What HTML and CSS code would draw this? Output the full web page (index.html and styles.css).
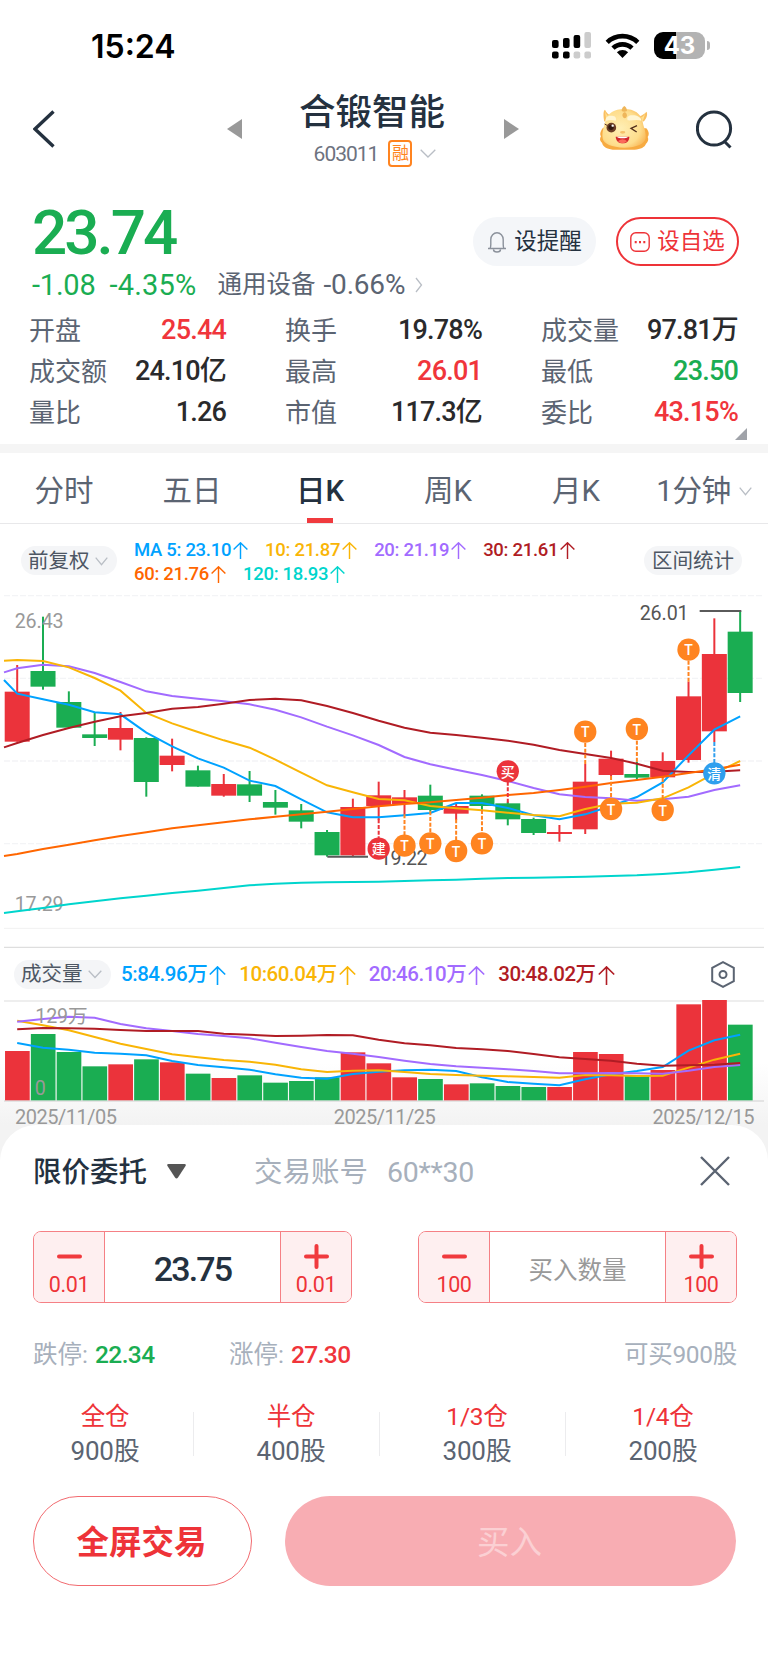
FILE: index.html
```
<!DOCTYPE html>
<html lang="zh-CN">
<head>
    <meta charset="UTF-8">
    <meta name="viewport" content="width=device-width, initial-scale=1.0">
    <title>合锻智能 603011</title>
    <link rel="stylesheet" href="styles.css">
</head>
<body>
    <svg width="0" height="0" class="defs">
        <symbol id="arrow" viewBox="0 0 17 19"><path d="M.8 8.500L8.500.9l7.700 7.600M8.500 1v18" fill="none" stroke="currentColor" stroke-width="1.600"/></symbol>
    </svg>

    <div class="status-bar">
        <span class="clock">15:24</span>
        <div class="status-icons">
            <svg class="signal" viewBox="0 0 39 27" width="39" height="27">
                <rect x="0" y="8" width="6.6" height="8" rx="2"/>
                <rect x="11" y="6" width="6.6" height="10" rx="2"/>
                <rect x="21.6" y="3" width="6.6" height="13" rx="2"/>
                <rect class="off" x="32.4" y="0" width="6.6" height="16" rx="2"/>
                <rect x="0" y="19.6" width="6.6" height="7" rx="2"/>
                <rect x="11" y="19.6" width="6.6" height="7" rx="2"/>
                <rect class="off" x="21.6" y="19.6" width="6.6" height="7" rx="2"/>
                <rect class="off" x="32.4" y="19.6" width="6.6" height="7" rx="2"/>
            </svg>
            <svg class="wifi" viewBox="0 0 35 25" width="35" height="25">
                <path d="M2.2 9.3a22 22 0 0 1 30.6 0M8 15.2a13.6 13.6 0 0 1 19 0" fill="none" stroke="#000" stroke-width="4.6"/>
                <path d="M17.5 25l-5.6-5.7a8 8 0 0 1 11.2 0z"/>
            </svg>
            <div class="battery"><span>43</span></div>
        </div>
    </div>

    <div class="header">
        <svg class="back" viewBox="0 0 22 38" width="22" height="38"><path d="M20.5 1.5L2 19l18.500 17.500"/></svg>
        <svg class="prev" viewBox="0 0 15 20" width="15" height="20"><path d="M15 0v20L0 10z"/></svg>
        <div class="stock">
            <h1>合锻智能</h1>
            <div class="stock-code">
                <span>603011</span>
                <span class="tag">融</span>
                <svg class="chevron" viewBox="0 0 16 9" width="16" height="9"><path d="M.7.7L8 8 15.300.7"/></svg>
            </div>
        </div>
        <svg class="next" viewBox="0 0 15 20" width="15" height="20"><path d="M0 0v20l15-10z"/></svg>
        <svg class="mascot" viewBox="0 0 150 138" width="50" height="46">
            <defs>
                <radialGradient id="skin" cx=".42" cy=".5" r=".65">
                    <stop offset="0" stop-color="#ffefb5"/>
                    <stop offset=".7" stop-color="#fedd8c"/>
                    <stop offset="1" stop-color="#f8b656"/>
                </radialGradient>
            </defs>
            <path d="M16 50C12 30 13 16 18 14c4 8 10 16 20 18zM134 50c12-14 12-26 8-30-4 6-12 10-20 14z" fill="#fabf62"/>
            <path d="M18 18c3 10 8 16 16 19l-12 12zM139 24c-4 8-8 12-14 14l6 12z" fill="#ffe08f"/>
            <path d="M12 68c-9 12-10 20-6 26-5 8-3 14 3 19 3 12 14 18 32 21h66c18-2 30-7 34-18 7-6 8-14 5-20 6-8 3-18-4-26z" fill="#f7ab42"/>
            <path d="M19 48C26 24 46 12 76 12s50 14 55 38c2 14 11 30 9 50-3 17-26 28-64 28S13 116 11 100c-3-18 4-34 8-52z" fill="url(#skin)"/>
            <path d="M68 18c0-8 4-13 8-15 4 2 8 8 8 15-5 3-11 3-16 0zM70 31c2-12 12-12 14 0-1 12-12 12-14 0z" fill="#efb65a"/>
            <path d="M20 48c-2-12 8-17 19-16 11 1 14 8 11 15-10-3-20-3-30 1zM86 46c-4-9 2-15 14-15 14 0 27 6 27 16-14-4-28 0-41-1z" fill="#fff5d2"/>
            <circle cx="37" cy="68" r="14.500" fill="#6b3d26"/>
            <circle cx="36" cy="67" r="8" fill="#2f1710"/>
            <circle cx="41" cy="62" r="3.500" fill="#fff"/>
            <path d="M24 61l-7-4" stroke="#5d3220" stroke-width="3"/>
            <path d="M114 62L96 70l17 11" fill="none" stroke="#54301c" stroke-width="4"/>
            <ellipse cx="71" cy="82" rx="8" ry="4" fill="#f6c06a"/>
            <path d="M50 95h41c0 13-8 20-20 20S51 108 50 95z" fill="#d3262c"/>
            <path d="M54 95h33c-3 6-30 6-33 0z" fill="#fff"/>
            <path d="M57 109c8-8 20-8 27 0-8 8-20 8-27 0z" fill="#fb6a5b"/>
        </svg>
        <svg class="search" viewBox="0 0 38 40" width="38" height="40"><circle cx="18" cy="18.500" r="16.600"/><path d="M28 31l6.500 6.500"/></svg>
    </div>

    <div class="quote">
        <div class="quote-left">
            <div class="price">23.74</div>
            <div class="change">
                <span class="down">-1.08</span>
                <span class="down pct">-4.35%</span>
                <span class="sector">通用设备</span>
                <span class="sector-pct">-0.66%</span>
                <svg class="chevron" viewBox="0 0 8 16" width="8" height="16"><path d="M1 1l5.500 7L1 15"/></svg>
            </div>
        </div>
        <div class="quote-actions">
            <button class="btn-alert">
                <svg viewBox="0 0 20 22" width="20" height="22"><path d="M1 17.500h18M3 17.500c.6-1 .8-2 .8-4V8.500a6.200 6.700 0 0 1 12.400 0v5c0 2 .2 3 .8 4M6.500 18.500a3.500 2.500 0 0 0 7 0"/></svg>设提醒
            </button>
            <button class="btn-fav">
                <svg viewBox="0 0 20 20" width="20" height="20"><rect x=".8" y=".8" width="18.400" height="18.400" rx="5"/><path d="M4.700 10.200h2M9 10.200h2M13.300 10.200h2" stroke-width="2.200"/></svg>设自选
            </button>
        </div>
    </div>

    <div class="stats">
        <div><label>开盘</label><b class="up">25.44</b></div>
        <div><label>换手</label><b>19.78%</b></div>
        <div><label>成交量</label><b>97.81万</b></div>
        <div><label>成交额</label><b>24.10亿</b></div>
        <div><label>最高</label><b class="up">26.01</b></div>
        <div><label>最低</label><b class="down">23.50</b></div>
        <div><label>量比</label><b>1.26</b></div>
        <div><label>市值</label><b>117.3亿</b></div>
        <div><label>委比</label><b class="up">43.15%</b></div>
    </div>
    <div class="expand"></div>

    <div class="tabs">
        <span>分时</span>
        <span>五日</span>
        <span class="active">日K</span>
        <span>周K</span>
        <span>月K</span>
        <span class="last">1分钟<svg class="chevron" viewBox="0 0 13 9" width="13" height="9"><path d="M.7.7l5.800 7 5.800-7"/></svg></span>
    </div>

    <div class="ma-bar">
        <span class="pill">前复权<svg class="chevron" viewBox="0 0 13 9" width="13" height="9"><path d="M.7.7l5.800 7 5.800-7"/></svg></span>
        <div class="ma-list">
            <div>
                <span class="ma5">MA 5: 23.10<svg class="arrow"><use href="#arrow"/></svg></span>
                <span class="ma10">10: 21.87<svg class="arrow"><use href="#arrow"/></svg></span>
                <span class="ma20">20: 21.19<svg class="arrow"><use href="#arrow"/></svg></span>
                <span class="ma30">30: 21.61<svg class="arrow"><use href="#arrow"/></svg></span>
            </div>
            <div>
                <span class="ma60">60: 21.76<svg class="arrow"><use href="#arrow"/></svg></span>
                <span class="ma120">120: 18.93<svg class="arrow"><use href="#arrow"/></svg></span>
            </div>
        </div>
        <span class="pill pill-range">区间统计</span>
    </div>
    <svg id="kline" class="chart" viewBox="0 0 2304 1104" width="768" height="368"></svg>

    <div class="volume">
        <div class="vol-bar">
            <span class="pill">成交量<svg class="chevron" viewBox="0 0 14 9" width="14" height="9"><path d="M.7.7L7 7.500 13.300.7"/></svg></span>
            <div class="vol-list">
                <span class="ma5">5:84.96万<svg class="arrow"><use href="#arrow"/></svg></span>
                <span class="ma10">10:60.04万<svg class="arrow"><use href="#arrow"/></svg></span>
                <span class="ma20">20:46.10万<svg class="arrow"><use href="#arrow"/></svg></span>
                <span class="ma30">30:48.02万<svg class="arrow"><use href="#arrow"/></svg></span>
            </div>
            <svg class="gear" viewBox="0 0 24 27" width="24" height="27"><path d="M12 1.200l10.800 5.600v13.400L12 25.800 1.200 20.200V6.800z"/><circle cx="12" cy="13.500" r="3.500"/></svg>
        </div>
        <svg id="vol" class="chart" viewBox="0 210 2304 306" width="768" height="102"></svg>
        <div class="dates"><span>2025/11/05</span><span>2025/11/25</span><span>2025/12/15</span></div>
    </div>

    <div class="sheet-wrap">
    <div class="sheet">
        <div class="sheet-head">
            <span class="order-type">限价委托</span>
            <svg class="caret" viewBox="0 0 19 15" width="19" height="15"><path d="M1.500 0h16q2 0 1 2l-7.500 11.500q-1.500 2-3 0L.5 2q-1-2 1-2z"/></svg>
            <span class="account">交易账号</span>
            <span class="account-no">60**30</span>
            <svg class="close" viewBox="0 0 30 30" width="30" height="30"><path d="M1 1l28 28M29 1L1 29"/></svg>
        </div>

        <div class="steppers">
            <div class="stepper">
                <button><svg viewBox="0 0 25 25" width="25" height="25"><path d="M2 12.500h21"/></svg>0.01</button>
                <div class="field">23.75</div>
                <button><svg viewBox="0 0 25 25" width="25" height="25"><path d="M2 12.500h21M12.500 2v21"/></svg>0.01</button>
            </div>
            <div class="stepper">
                <button><svg viewBox="0 0 25 25" width="25" height="25"><path d="M2 12.500h21"/></svg>100</button>
                <div class="field placeholder">买入数量</div>
                <button><svg viewBox="0 0 25 25" width="25" height="25"><path d="M2 12.500h21M12.500 2v21"/></svg>100</button>
            </div>
        </div>

        <div class="limits">
            <span class="limit">跌停: <b class="down">22.34</b></span>
            <span class="limit">涨停: <b class="up">27.30</b></span>
            <span class="can-buy">可买900股</span>
        </div>

        <div class="positions">
            <div><em>全仓</em>900股</div>
            <div><em>半仓</em>400股</div>
            <div><em>1/3仓</em>300股</div>
            <div><em>1/4仓</em>200股</div>
        </div>

        <div class="actions">
            <button class="btn-full">全屏交易</button>
            <button class="btn-buy">买入</button>
        </div>
    </div>
    </div>

    <script>
        const RED = "#eb333b", GREEN = "#1aad52";
        const STEP = 77.46, FIRST = 51.6;
        const cx = i => FIRST + STEP * i;

        // [up?, body top, body bottom, high, low] in chart units (3 per pixel)
        const candles = [
            [1,335,485,255,485],[0,273,320,110,329],[0,366,443,334,443],[0,463,474,396,498],[1,444,479,396,511],
            [0,474,606,472,650],[1,527,555,476,574],[0,571,620,557,620],[1,612,647,582,650],[0,613,647,573,666],
            [0,666,683,630,704],[0,691,725,672,745],[0,756,826,750,830],[1,681,826,656,829],[1,646,678,605,720],
            [1,652,672,630,705],[0,647,690,614,695],[1,678,701,672,720],[0,647,678,643,695],[0,670,718,665,736],
            [0,717,759,713,765],[1,756,762,735,785],[1,605,748,552,762],[1,536,585,512,588],[0,582,593,545,597],
            [1,543,592,517,595],[1,349,540,305,548],[1,222,454,115,486],[0,155,339,93,366]
        ];

        // first value sits on the left edge of the chart
        const averages = {
            "#00a2ff": [300,341,358,374,397,403,458,499,535,563,602,618,658,697,712,712,706,699,669,669,684,706,718,703,678,651,607,526,449,409],
            "#a26bff": [277,265,254,259,279,306,334,348,356,364,373,389,412,440,466,495,531,553,569,585,603,624,643,651,655,662,658,650,630,616],
            "#f9b506": [242,240,243,262,294,332,399,430,456,481,503,539,578,616,637,657,661,678,685,691,698,705,709,687,671,668,655,622,580,543],
            "#b01c24": [502,489,465,444,425,409,399,386,381,371,360,356,361,378,399,422,443,458,465,473,482,494,510,522,534,551,572,576,575,571],
            "#ff6600": [828,822,807,794,781,768,757,745,736,727,718,710,703,695,687,679,672,667,660,653,645,639,630,620,609,600,590,579,568,554],
            "#00d5cd": [999,994,984,973,964,955,947,939,932,924,916,911,908,907,906,905,903,901,899,896,894,893,892,890,888,886,882,877,869,861]
        };

        // [index, y, text, color, wick end]
        const marks = [
            [14,806,"建",RED,718],[15,797,"T","#ff8420",703],[16,790,"T","#ff8420",694],[17,813,"T","#ff8420",718],
            [18,790,"T","#ff8420",690],[19,574,"买",RED,668],[22,455,"T","#ff8420",552],[23,687,"T","#ff8420",588],
            [24,447,"T","#ff8420",545],[25,690,"T","#ff8420",594],[26,209,"T","#ff8420",305],[27,580,"清","#2f9fee",486]
        ];

        const volumes = [363,312,366,409,403,388,397,431,444,436,458,453,442,367,400,442,447,463,460,468,471,471,366,372,438,420,223,210,284];
        const volAverages = {
            "#00a2ff": [339,353,359,368,371,376,393,405,412,419,433,443,446,432,425,421,419,423,442,456,461,466,448,433,423,411,362,331,314],
            "#f9b506": [272,286,301,321,341,357,373,382,390,395,404,418,426,422,421,426,432,435,437,439,441,443,435,436,438,437,413,389,371],
            "#a26bff": [275,267,260,263,282,295,303,312,318,325,338,351,363,371,381,392,402,409,413,418,423,430,430,429,430,431,422,411,405],
            "#b01c24": [298,294,295,296,300,303,303,303,311,314,318,317,315,316,329,340,346,354,358,363,372,382,387,392,401,407,406,404,399]
        };

        function line(points, color) {
            return `<polyline points="${points.join(" ")}" fill="none" stroke="${color}" stroke-width="6"/>`;
        }

        function drawKline() {
            let out = "";
            [47, 295, 543, 791].forEach(y => {
                out += `<path d="M12 ${y}H2292" stroke="#f3f4f6" stroke-width="4" stroke-dasharray="18 6"/>`;
            });
            out += `<path d="M12 1045H2292" stroke="#f1f1f1" stroke-width="3"/>`;
            out += `<path d="M12 1102H2292" stroke="#dedede" stroke-width="4"/>`;
            candles.forEach(([up, top, bottom, high, low], i) => {
                const color = up ? RED : GREEN;
                out += `<path d="M${cx(i)} ${high}V${low}" stroke="${color}" stroke-width="6"/>`;
                out += `<rect x="${cx(i) - 37.5}" y="${top}" width="75" height="${bottom - top}" fill="${color}"/>`;
            });
            out += `<path d="M982 830H1104M2099 93H2224" stroke="#5a5a5a" stroke-width="6"/>`;
            out += `<text x="44" y="144" class="axis" textLength="147">26.43</text>`;
            out += `<text x="44" y="993" class="axis" textLength="147">17.29</text>`;
            out += `<text x="1140" y="854" class="peak" textLength="143">19.22</text>`;
            out += `<text x="1919" y="120" class="peak" textLength="147">26.01</text>`;
            for (const color in averages) {
                out += line(averages[color].map((y, i) => (i ? cx(i - 1) : 12) + "," + y), color);
            }
            marks.forEach(([i, y, text, color, end]) => {
                out += `<path d="M${cx(i)} ${end}V${y}" stroke="${color}" stroke-width="6" stroke-dasharray="12 5"/>`;
                out += `<circle cx="${cx(i)}" cy="${y}" r="33.500" fill="${color}"/>`;
                out += `<text x="${cx(i)}" y="${y + 17}" class="mark">${text}</text>`;
            });
            document.getElementById("kline").innerHTML = out;
        }

        function drawVolume() {
            let out = `<path d="M12 213H2292" stroke="#e9e9e9" stroke-width="5"/><path d="M12 513H2292" stroke="#dedede" stroke-width="4"/>`;
            volumes.forEach((y, i) => {
                out += `<rect x="${cx(i) - 36.5}" y="${y}" width="74" height="${511 - y}" fill="${candles[i][0] ? RED : GREEN}"/>`;
            });
            for (const color in volAverages) {
                out += line(volAverages[color].map((y, i) => cx(i) + "," + y), color);
            }
            out += `<text x="106" y="280" class="axis" textLength="157">129万</text><text x="104" y="494" class="axis">0</text>`;
            document.getElementById("vol").innerHTML = out;
        }

        drawKline();
        drawVolume();
    </script>
</body>
</html>
```
FILE: styles.css
```
* {
    box-sizing: border-box;
}

body {
    font-family: Roboto, "Noto Sans CJK SC", sans-serif;
    margin: 0;
    width: 768px;
    height: 1663px;
    overflow: hidden;
    background: #fff;
    color: #24313f;
    line-height: 1;
}

button {
    font-family: inherit;
    background: none;
    border: none;
    padding: 0;
    line-height: 1;
}

b, em {
    font-style: normal;
    font-weight: 500;
}

svg {
    flex: none;
}

.defs {
    display: block;
}

.up { color: #f0353b; }
.down { color: #1aad52; }

.chevron {
    fill: none;
    stroke: #b9bec5;
    stroke-width: 1.3;
}

.status-bar {
    height: 70px;
    padding: 23px 58px 0 91px;
    display: flex;
    justify-content: space-between;
    align-items: flex-start;
}

.clock {
    font: 600 32px/48px Inter, sans-serif;
    color: #000;
    letter-spacing: 0;
}

.status-icons {
    display: flex;
    align-items: center;
    height: 45px;
}

.signal .off { fill: #ccc; }
.wifi { margin: 0 14px; }

.battery {
    position: relative;
    width: 51px;
    height: 27px;
    border-radius: 9px;
    background: linear-gradient(to right, #000 44%, #b3b3b3 44%);
    color: #fff;
    font: 700 24px/27px Inter, sans-serif;
    text-align: center;
    margin-right: 5px;
}

.battery::after {
    content: "";
    position: absolute;
    right: -5px;
    top: 9px;
    width: 3px;
    height: 9px;
    border-radius: 0 4px 4px 0;
    background: #b3b3b3;
}

.header {
    height: 126px;
    padding: 0 35px 0 33px;
    display: flex;
    align-items: flex-start;
}

.back {
    margin-top: 40px;
    fill: none;
    stroke: #24313f;
    stroke-width: 3.4;
}

.prev, .next {
    margin-top: 49px;
    fill: #999;
}

.prev { margin-left: 172px; }
.next { margin-left: 59px; }

.stock {
    width: 146px;
    margin-left: 57px;
    display: flex;
    flex-direction: column;
    align-items: center;
}

.stock h1 {
    margin: 21px 0 0;
    font-size: 36.5px;
    line-height: 44px;
    font-weight: 500;
    white-space: nowrap;
}

.stock-code {
    display: flex;
    align-items: center;
    height: 27px;
    margin-top: 5px;
    margin-left: 6px;
    font-size: 21px;
    color: #6d7280;
    letter-spacing: -1px;
}

.stock-code span:first-child {
    padding-top: 2px;
}

.tag {
    width: 24px;
    height: 27px;
    margin: 0 8px 0 10px;
    border: 2px solid #ff8420;
    border-radius: 4px;
    color: #ff8420;
    font-size: 17px;
    line-height: 22px;
    text-align: center;
    letter-spacing: 0;
}

.mascot {
    margin: 35px 0 0 80px;
}

.search {
    margin: 40px 0 0 47px;
    fill: none;
    stroke: #24313f;
    stroke-width: 3;
}

.quote {
    height: 118px;
    padding: 0 29px 0 32px;
    display: flex;
    justify-content: space-between;
}

.price {
    font-size: 62px;
    line-height: 74px;
    height: 70px;
    font-weight: 500;
    letter-spacing: -3px;
    color: #1aad52;
}

.change {
    display: flex;
    align-items: center;
    height: 38px;
    font-size: 29px;
    letter-spacing: -0.2px;
}

.change .pct {
    margin-left: 14px;
    letter-spacing: 0.2px;
}

.sector {
    margin: 0 8px 0 21px;
    font-size: 24.5px;
    letter-spacing: 0;
    color: #5b6472;
}

.sector-pct {
    font-size: 28px;
    color: #5b6472;
}

.change .chevron { margin-left: 10px; }

.quote-actions {
    display: flex;
    gap: 20px;
    padding-top: 21px;
}

.quote-actions button {
    width: 123px;
    height: 49px;
    border-radius: 25px;
    display: flex;
    align-items: center;
    justify-content: center;
    font-size: 22.5px;
}

.quote-actions svg {
    fill: none;
    stroke-width: 1.4;
    margin-right: 7px;
}

.btn-alert {
    background: #f4f6f9;
    color: #24313f;
}

.btn-alert svg { stroke: #8b919b; }

.btn-fav {
    border: 2px solid #ee3338;
    color: #ee3338;
}

.btn-fav svg { stroke: #ee3338; }

.stats {
    display: grid;
    grid-template-columns: repeat(3, 196px);
    grid-auto-rows: 41px;
    column-gap: 60px;
    padding: 0 29px;
    margin-top: -4px;
}

.stats div {
    display: flex;
    justify-content: space-between;
    align-items: center;
    white-space: nowrap;
}

.stats label {
    font-size: 26px;
    color: #5b6472;
}

.stats b {
    font-size: 27px;
    letter-spacing: -0.8px;
    margin-right: -1px;
}

.stats b:not([class]) { color: #2a2a2c; }

.expand {
    height: 20px;
    border-bottom: 9px solid #f5f5f5;
    position: relative;
}

.expand::after {
    content: "";
    position: absolute;
    right: 21px;
    top: -5px;
    border-left: 12px solid transparent;
    border-bottom: 12px solid #a0a3a9;
}

.tabs {
    height: 71px;
    border-bottom: 1px solid #e8e8ea;
    display: flex;
    font-size: 29.5px;
    line-height: 76px;
    color: #5b6472;
}

.tabs span {
    width: 128px;
    text-align: center;
    white-space: nowrap;
}

.tabs .active {
    position: relative;
    font-weight: 500;
    color: #24313f;
}

.tabs .active::after {
    content: "";
    position: absolute;
    left: 51px;
    bottom: 0;
    width: 26px;
    height: 5px;
    background: #f03a3e;
}

.tabs .last {
    letter-spacing: -0.3px;
}

.last .chevron {
    margin-left: 8px;
    vertical-align: 5px;
}

.ma-bar {
    height: 56px;
    display: flex;
    padding: 0 26px 0 21px;
}

.pill {
    flex: none;
    display: flex;
    align-items: center;
    height: 29px;
    border-radius: 15px;
    background: #f4f5f7;
    padding: 1px 7px 0;
    font-size: 20.5px;
    color: #4e5764;
    white-space: nowrap;
}

.ma-bar .pill {
    margin-top: 22px;
    width: 96px;
}

.ma-bar .pill-range {
    width: 98px;
    margin-left: auto;
    justify-content: center;
}

.pill .chevron { margin-left: 5px; }

.ma-list {
    margin: 14px 0 0 17px;
    font-size: 18.5px;
    font-weight: 500;
    line-height: 24px;
    white-space: nowrap;
}

.ma-list div {
    display: flex;
    gap: 16px;
    height: 24px;
    letter-spacing: -0.3px;
}

.arrow {
    width: 17px;
    height: 17px;
    margin-left: 1px;
    vertical-align: -3px;
}

.ma5 { color: #00a2ff; }
.ma10 { color: #f9b506; }
.ma20 { color: #a26bff; }
.ma30 { color: #b01c24; }
.ma60 { color: #ff6600; }
.ma120 { color: #00d5cd; }

.chart {
    display: block;
}

.axis {
    font-size: 59px;
    fill: #999;
}

.peak {
    font-size: 59px;
    fill: #555;
}

.mark {
    font-size: 42px;
    font-weight: 500;
    fill: #fff;
    text-anchor: middle;
}

.volume {
    height: 177px;
    background: linear-gradient(to bottom, #fff 65%, #f3f3f3);
}

.vol-bar {
    height: 52px;
    display: flex;
    align-items: center;
    padding: 0 33px 0 14px;
}

.vol-bar .pill {
    width: 97px;
}

.vol-list {
    display: flex;
    gap: 13px;
    margin-left: 10px;
    font-size: 20.5px;
    font-weight: 500;
    line-height: 28px;
    letter-spacing: -0.45px;
    white-space: nowrap;
}

.vol-list .arrow {
    height: 19px;
    margin-left: 2px;
    vertical-align: -4px;
}

.gear {
    margin-left: auto;
    fill: none;
    stroke: #5b6472;
    stroke-width: 2;
}

.dates {
    height: 23px;
    padding: 8px 14px 0 15px;
    display: flex;
    justify-content: space-between;
    font-size: 20px;
    line-height: 15px;
    letter-spacing: -0.5px;
    color: #999;
}

.sheet-wrap {
    background: linear-gradient(to bottom, #f3f3f3 30px, #fff 50px);
}

.sheet {
    height: 538px;
    background: #fff;
    border-radius: 36px 36px 0 0;
    padding: 0 31px 0 33px;
}

.sheet-head {
    display: flex;
    align-items: center;
    height: 92px;
    color: #a7b0bc;
    font-size: 28.5px;
}

.sheet-head span {
    padding-top: 5px;
}

.order-type {
    font-weight: 500;
    color: #24313f;
}

.caret {
    margin: 0 68px 0 20px;
    fill: #555;
}

.account-no {
    margin-left: 19px;
    letter-spacing: -0.3px;
}

.close {
    margin-left: auto;
    margin-right: 7px;
    stroke: #5b6472;
    stroke-width: 2.4;
}

.steppers {
    display: flex;
    justify-content: space-between;
    margin-top: 14px;
}

.stepper {
    display: flex;
    width: 319px;
    height: 72px;
    border: 1.5px solid #f58085;
    border-radius: 8px;
    overflow: hidden;
}

.stepper button {
    width: 70px;
    display: flex;
    flex-direction: column;
    align-items: center;
    padding-top: 12px;
    gap: 5px;
    background: #feeff0;
    color: #ee3338;
    font-size: 21.5px;
    letter-spacing: -0.4px;
}

.stepper svg {
    stroke: #f03a3e;
    stroke-width: 4;
    stroke-linecap: round;
}

.field {
    flex: 1;
    border: solid #f58085;
    border-width: 0 1px;
    display: flex;
    align-items: center;
    justify-content: center;
    font-size: 34px;
    font-weight: 500;
    letter-spacing: -1.8px;
    padding-top: 4px;
}

.placeholder {
    font-size: 24.5px;
    font-weight: 400;
    letter-spacing: 0;
    padding-top: 9px;
    color: #999;
}

.limits {
    display: flex;
    margin-top: 36px;
    height: 32px;
    align-items: center;
    font-size: 24.5px;
    color: #a7b0bc;
    white-space: nowrap;
}

.limit {
    width: 196px;
}

.limit b {
    margin-left: 1px;
    letter-spacing: -0.6px;
}

.can-buy {
    margin-left: auto;
    letter-spacing: -0.3px;
}

.positions {
    display: flex;
    margin: 28px -12px 0 -21px;
    height: 71px;
}

.positions div {
    position: relative;
    flex: none;
    width: 186px;
    display: flex;
    flex-direction: column;
    align-items: center;
    font-size: 26px;
    line-height: 35px;
    letter-spacing: -0.2px;
    color: #5b6472;
}

.positions div + div::before {
    content: "";
    position: absolute;
    left: -5px;
    top: 13px;
    height: 44px;
    border-left: 1px solid #ececee;
}

.positions em {
    font-size: 24.5px;
    color: #ee3338;
    font-weight: 400;
}

.actions {
    display: flex;
    justify-content: space-between;
    margin: 26px 1px 0 0;
}

.actions button {
    height: 90px;
    border-radius: 45px;
    font-size: 32.5px;
    padding: 4px 2px 0 0;
}

.btn-full {
    width: 219px;
    border: 1.5px solid #f26b70;
    color: #ee3338;
    font-weight: 700;
}

.btn-buy {
    width: 451px;
    background: #f8adb3;
    color: #fbd0d3;
}
```
